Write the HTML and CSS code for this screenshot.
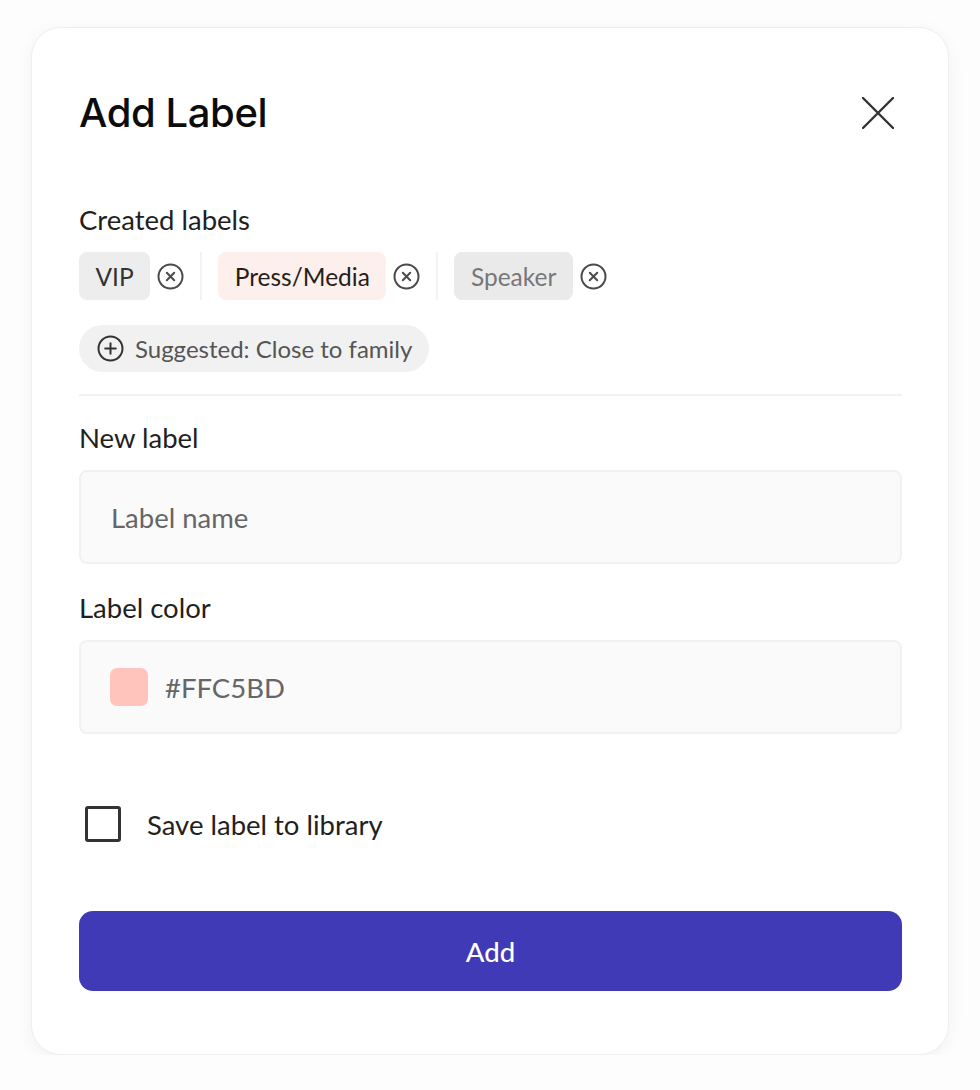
FILE: index.html
```html
<!DOCTYPE html>
<html lang="en">
<head>
<meta charset="utf-8">
<title>Add Label</title>
<link rel="stylesheet" href="styles.css">
</head>
<body>
<div class="card">
  <div class="header">
    <h1 class="title">Add Label</h1>
    <button class="close" aria-label="Close">
      <svg width="32" height="32" viewBox="0 0 32 32"><path d="M1 1 L31 31 M31 1 L1 31" stroke="#333" stroke-width="2.4" stroke-linecap="round" fill="none"/></svg>
    </button>
  </div>

  <div class="field-label first">Created labels</div>
  <div class="chips">
    <div class="chip-group">
      <span class="chip chip-vip">VIP</span>
      <svg class="xicon" width="27" height="27" viewBox="0 0 27 27"><circle cx="13.5" cy="13.5" r="12" stroke="#4a4a4a" stroke-width="2" fill="none"/><path d="M9.8 9.8 L17.2 17.2 M17.2 9.8 L9.8 17.2" stroke="#4a4a4a" stroke-width="2" stroke-linecap="round"/></svg>
    </div>
    <span class="sep"></span>
    <div class="chip-group">
      <span class="chip chip-press">Press/Media</span>
      <svg class="xicon" width="27" height="27" viewBox="0 0 27 27"><circle cx="13.5" cy="13.5" r="12" stroke="#4a4a4a" stroke-width="2" fill="none"/><path d="M9.8 9.8 L17.2 17.2 M17.2 9.8 L9.8 17.2" stroke="#4a4a4a" stroke-width="2" stroke-linecap="round"/></svg>
    </div>
    <span class="sep"></span>
    <div class="chip-group">
      <span class="chip chip-speaker">Speaker</span>
      <svg class="xicon" width="27" height="27" viewBox="0 0 27 27"><circle cx="13.5" cy="13.5" r="12" stroke="#4a4a4a" stroke-width="2" fill="none"/><path d="M9.8 9.8 L17.2 17.2 M17.2 9.8 L9.8 17.2" stroke="#4a4a4a" stroke-width="2" stroke-linecap="round"/></svg>
    </div>
  </div>

  <div class="suggest-row">
    <button class="suggest">
      <svg width="27" height="27" viewBox="0 0 27 27"><circle cx="13.5" cy="13.5" r="12" stroke="#333" stroke-width="2" fill="none"/><path d="M13.5 8.2 V18.8 M8.2 13.5 H18.8" stroke="#333" stroke-width="2" stroke-linecap="round"/></svg>
      <span>Suggested: Close to family</span>
    </button>
  </div>

  <div class="divider"></div>

  <div class="field-label">New label</div>
  <div class="input"><span class="placeholder">Label name</span></div>

  <div class="field-label">Label color</div>
  <div class="input color-input"><span class="swatch"></span><span class="placeholder">#FFC5BD</span></div>

  <label class="check-row">
    <span class="checkbox"></span>
    <span class="check-text">Save label to library</span>
  </label>

  <button class="add-btn">Add</button>
</div>
</body>
</html>
```

FILE: styles.css
```css
* { box-sizing: border-box; }

html, body {
  margin: 0;
  padding: 0;
  background: #fdfdfd;
  font-family: Lato, "Noto Sans", sans-serif;
  color: #231f20;
}

body {
  padding: 27px 0 0 31px;
}

.card {
  width: 918px;
  height: 1028px;
  background: #fff;
  border: 1px solid #efefef;
  border-radius: 30px;
  box-shadow: 0 4px 18px rgba(0, 0, 0, 0.05);
  padding: 61px 46px 0 47px;
  display: flex;
  flex-direction: column;
}

.header {
  display: flex;
  justify-content: space-between;
  align-items: center;
  height: 48px;
}

.title {
  margin: 0;
  font-family: Inter, sans-serif;
  font-weight: 500;
  font-size: 40px;
  letter-spacing: -0.4px;
  line-height: 48px;
  color: #0c0c0c;
}

.close {
  border: 0;
  background: none;
  padding: 0;
  width: 32px;
  height: 32px;
  margin-right: 8px;
  display: flex;
}

.field-label {
  font-size: 27.5px;
  line-height: 30px;
  height: 30px;
  margin-top: 29px;
  color: #231f20;
}

.field-label.first {
  margin-top: 68px;
}

.chips {
  display: flex;
  align-items: center;
  margin-top: 17px;
  height: 48px;
}

.chip-group {
  display: flex;
  align-items: center;
  gap: 7px;
}

.chip {
  display: inline-flex;
  align-items: center;
  height: 48px;
  padding: 0 16.5px;
  border-radius: 8px;
  font-size: 24.5px;
}

.chip-vip { background: #ededed; color: #333; }
.chip-press { background: #fdefec; color: #231f20; }
.chip-speaker { background: #ebeaeb; color: #777; }

.sep {
  width: 2px;
  height: 48px;
  background: #f3f3f3;
  margin: 0 16px;
}

.suggest-row {
  display: flex;
  margin-top: 25px;
}

.suggest {
  display: inline-flex;
  align-items: center;
  gap: 11px;
  height: 47px;
  padding: 0 17px 0 18px;
  border: 0;
  border-radius: 24px;
  background: #f1f1f1;
  font-family: Lato, "Noto Sans", sans-serif;
  font-size: 24px;
  color: #555;
}

.divider {
  height: 2px;
  background: #f2f2f2;
  margin-top: 22px;
}

.divider + .field-label {
  margin-top: 27px;
}

.input {
  margin-top: 17px;
  height: 94px;
  background: #fafafa;
  border: 2px solid #f1f1f1;
  border-radius: 8px;
  display: flex;
  align-items: center;
  padding-left: 30px;
}

.placeholder {
  font-size: 27.5px;
  color: #666;
}

.color-input {
  gap: 17px;
  padding-left: 29px;
}

.swatch {
  width: 38px;
  height: 38px;
  border-radius: 7px;
  background: #ffc5bd;
}

.check-row {
  display: flex;
  align-items: center;
  margin-top: 72px;
  height: 36px;
  padding-left: 6px;
}

.checkbox {
  width: 36px;
  height: 36px;
  border: 3px solid #333;
  border-radius: 3px;
}

.check-text {
  font-size: 27.5px;
  margin-left: 26px;
  color: #231f20;
}

.add-btn {
  margin-top: 69px;
  height: 80px;
  border: 0;
  border-radius: 14px;
  background: #403ab6;
  color: #fff;
  font-family: Lato, "Noto Sans", sans-serif;
  font-size: 27.5px;
  font-weight: 500;
}
```
